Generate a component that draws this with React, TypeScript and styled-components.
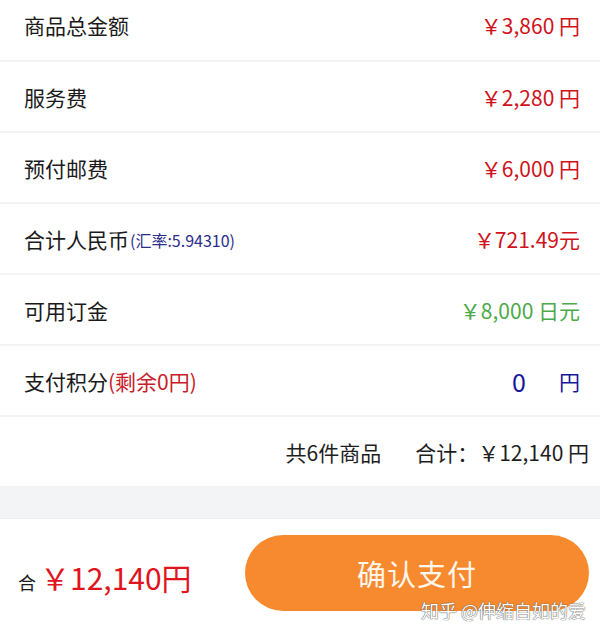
import React from "react";
import styled, { createGlobalStyle } from "styled-components";

const GlobalStyle = createGlobalStyle`
  html, body {
    margin: 0;
    padding: 0;
    background: #ffffff;
  }
  body {
    font-family: "Noto Sans CJK SC", "Noto Sans", sans-serif;
    color: #222222;
  }
`;

type Tone = "red" | "green" | "blue";

const toneColor: Record<Tone, string> = {
  red: "#d0121b",
  green: "#4caa4a",
  blue: "#16169e",
};

type Row = {
  label: string;
  rate?: string;
  remain?: string;
  amount: string;
  unit?: string;
  tone: Tone;
};

const rows: Row[] = [
  { label: "商品总金额", amount: "￥3,860 円", tone: "red" },
  { label: "服务费", amount: "￥2,280 円", tone: "red" },
  { label: "预付邮费", amount: "￥6,000 円", tone: "red" },
  { label: "合计人民币", rate: "(汇率:5.94310)", amount: "￥721.49元", tone: "red" },
  { label: "可用订金", amount: "￥8,000 日元", tone: "green" },
  { label: "支付积分", remain: "(剩余0円)", amount: "0", unit: "円", tone: "blue" },
];

export default function App() {
  return (
    <Page>
      <GlobalStyle />
      <List>
        {rows.map((row, i) => (
          <Item key={row.label} $first={i === 0}>
            <Label>
              {row.label}
              {row.rate && <Rate>{row.rate}</Rate>}
              {row.remain && <Remain>{row.remain}</Remain>}
            </Label>
            <Amount $tone={row.tone}>
              {row.unit ? <Points>{row.amount}</Points> : row.amount}
              {row.unit && <Unit>{row.unit}</Unit>}
            </Amount>
          </Item>
        ))}
        <Summary>
          <span>共6件商品</span>
          <span>合计：￥12,140 円</span>
        </Summary>
      </List>
      <Gap />
      <Footer>
        <Total>
          <TotalPrefix>合</TotalPrefix>
          <TotalValue>￥12,140円</TotalValue>
        </Total>
        <PayButton>确认支付</PayButton>
        <Watermark>知乎 @伸缩自如的爱</Watermark>
      </Footer>
    </Page>
  );
}

const Page = styled.div`
  width: 600px;
  height: 637px;
  overflow: hidden;
  display: flex;
  flex-direction: column;
  background: #ffffff;
`;

const List = styled.div`
  display: flex;
  flex-direction: column;
`;

const Item = styled.div<{ $first?: boolean }>`
  height: ${(p) => (p.$first ? "62px" : "71px")};
  padding: ${(p) => (p.$first ? "0 20px 10px 24px" : "0 20px 0 24px")};
  box-sizing: border-box;
  display: flex;
  align-items: center;
  justify-content: space-between;
  border-bottom: 2px solid #f3f3f3;
`;

const Label = styled.div`
  font-size: 21px;
  color: #1a1a1a;
  display: flex;
  align-items: center;
`;

const Rate = styled.span`
  font-size: 16px;
  color: #2c2c8c;
  margin-left: 1px;
  margin-top: 2px;
`;

const Remain = styled.span`
  font-size: 21px;
  color: #c8202a;
`;

const Amount = styled.div<{ $tone: Tone }>`
  font-size: 21px;
  color: ${(p) => toneColor[p.$tone]};
  display: flex;
  align-items: center;
`;

const Points = styled.span`
  font-size: 25px;
`;

const Unit = styled.span`
  margin-left: 33px;
`;

const Summary = styled.div`
  height: 69px;
  padding: 0 11px 0 0;
  display: flex;
  align-items: center;
  justify-content: flex-end;
  gap: 34px;
  font-size: 21px;
  color: #1e1e1e;
`;

const Gap = styled.div`
  height: 32px;
  background: #f3f4f6;
  border-bottom: 1px solid #eceef0;
`;

const Footer = styled.div`
  position: relative;
  flex: 1;
  display: flex;
  align-items: flex-start;
  justify-content: space-between;
  padding: 16px 11px 0 18px;
`;

const Total = styled.div`
  display: flex;
  align-items: baseline;
  margin-top: 20px;
`;

const TotalPrefix = styled.span`
  font-size: 18px;
  color: #1a1a1a;
  margin-right: 4px;
`;

const TotalValue = styled.span`
  font-size: 30px;
  color: #e0141e;
`;

const PayButton = styled.button`
  width: 344px;
  height: 76px;
  border: none;
  border-radius: 38px;
  background: #f78a2f;
  color: #fff6ec;
  font-family: "Noto Sans CJK SC", "Noto Sans", sans-serif;
  font-size: 29px;
  letter-spacing: 1px;
  padding: 0;
  cursor: pointer;
`;

const Watermark = styled.div`
  position: absolute;
  right: 14px;
  bottom: 14px;
  font-size: 18px;
  color: #ffffff;
  text-shadow: 0 0 1px #555, 0 0 1px #555;
`;
